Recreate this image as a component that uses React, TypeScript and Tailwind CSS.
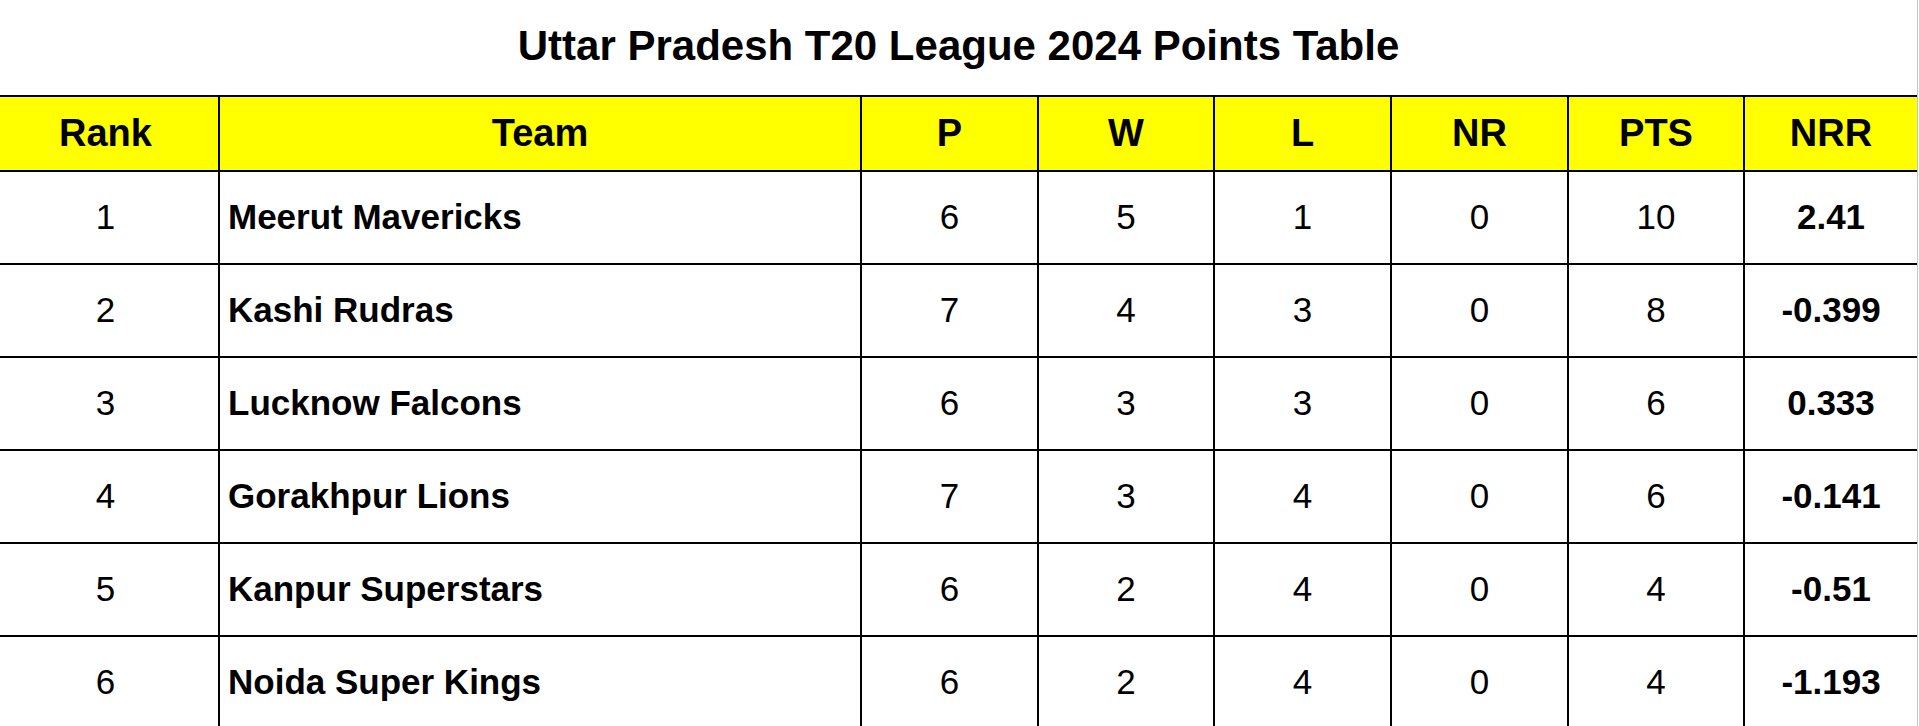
type Row = {
  rank: number;
  team: string;
  p: number;
  w: number;
  l: number;
  nr: number;
  pts: number;
  nrr: string;
};

const rows: Row[] = [
  { rank: 1, team: 'Meerut Mavericks', p: 6, w: 5, l: 1, nr: 0, pts: 10, nrr: '2.41' },
  { rank: 2, team: 'Kashi Rudras', p: 7, w: 4, l: 3, nr: 0, pts: 8, nrr: '-0.399' },
  { rank: 3, team: 'Lucknow Falcons', p: 6, w: 3, l: 3, nr: 0, pts: 6, nrr: '0.333' },
  { rank: 4, team: 'Gorakhpur Lions', p: 7, w: 3, l: 4, nr: 0, pts: 6, nrr: '-0.141' },
  { rank: 5, team: 'Kanpur Superstars', p: 6, w: 2, l: 4, nr: 0, pts: 4, nrr: '-0.51' },
  { rank: 6, team: 'Noida Super Kings', p: 6, w: 2, l: 4, nr: 0, pts: 4, nrr: '-1.193' },
];

const headers = ['Rank', 'Team', 'P', 'W', 'L', 'NR', 'PTS', 'NRR'];

const cols = 'grid grid-cols-[218px_642px_177px_176px_177px_177px_176px_1fr]';

export default function App() {
  return (
    <div className="w-[1919px] h-[726px] overflow-hidden bg-white text-black font-['Liberation_Sans',Arial,sans-serif]">
      <div className="w-[1918px] h-full border-r border-[#c4c4c4]">
        {/* Title */}
        <div className="h-[95px] flex items-center justify-center pb-[3px]">
          <h1 className="text-[42px] font-bold leading-none">Uttar Pradesh T20 League 2024 Points Table</h1>
        </div>

        <div className="border-t-2 border-black">
          {/* Header */}
          <div className={`${cols} h-[75px] bg-[#ffff00] border-b-2 border-black`}>
            {headers.map((h, i) => (
              <div
                key={h}
                className={`flex items-center justify-center text-[38px] font-bold ${i > 0 ? 'border-l-2 border-black' : 'pr-[7px]'}`}
              >
                {h}
              </div>
            ))}
          </div>

          {rows.map((r) => (
            <div key={r.rank} className={`${cols} h-[93px] border-b-2 border-black text-[35px]`}>
              <div className="flex items-center justify-center pr-[7px]">{r.rank}</div>
              <div className="flex items-center pl-[8px] border-l-2 border-black font-bold">{r.team}</div>
              <div className="flex items-center justify-center border-l-2 border-black">{r.p}</div>
              <div className="flex items-center justify-center border-l-2 border-black">{r.w}</div>
              <div className="flex items-center justify-center border-l-2 border-black">{r.l}</div>
              <div className="flex items-center justify-center border-l-2 border-black">{r.nr}</div>
              <div className="flex items-center justify-center border-l-2 border-black">{r.pts}</div>
              <div className="flex items-center justify-center border-l-2 border-black font-bold">{r.nrr}</div>
            </div>
          ))}
        </div>
      </div>
    </div>
  );
}
